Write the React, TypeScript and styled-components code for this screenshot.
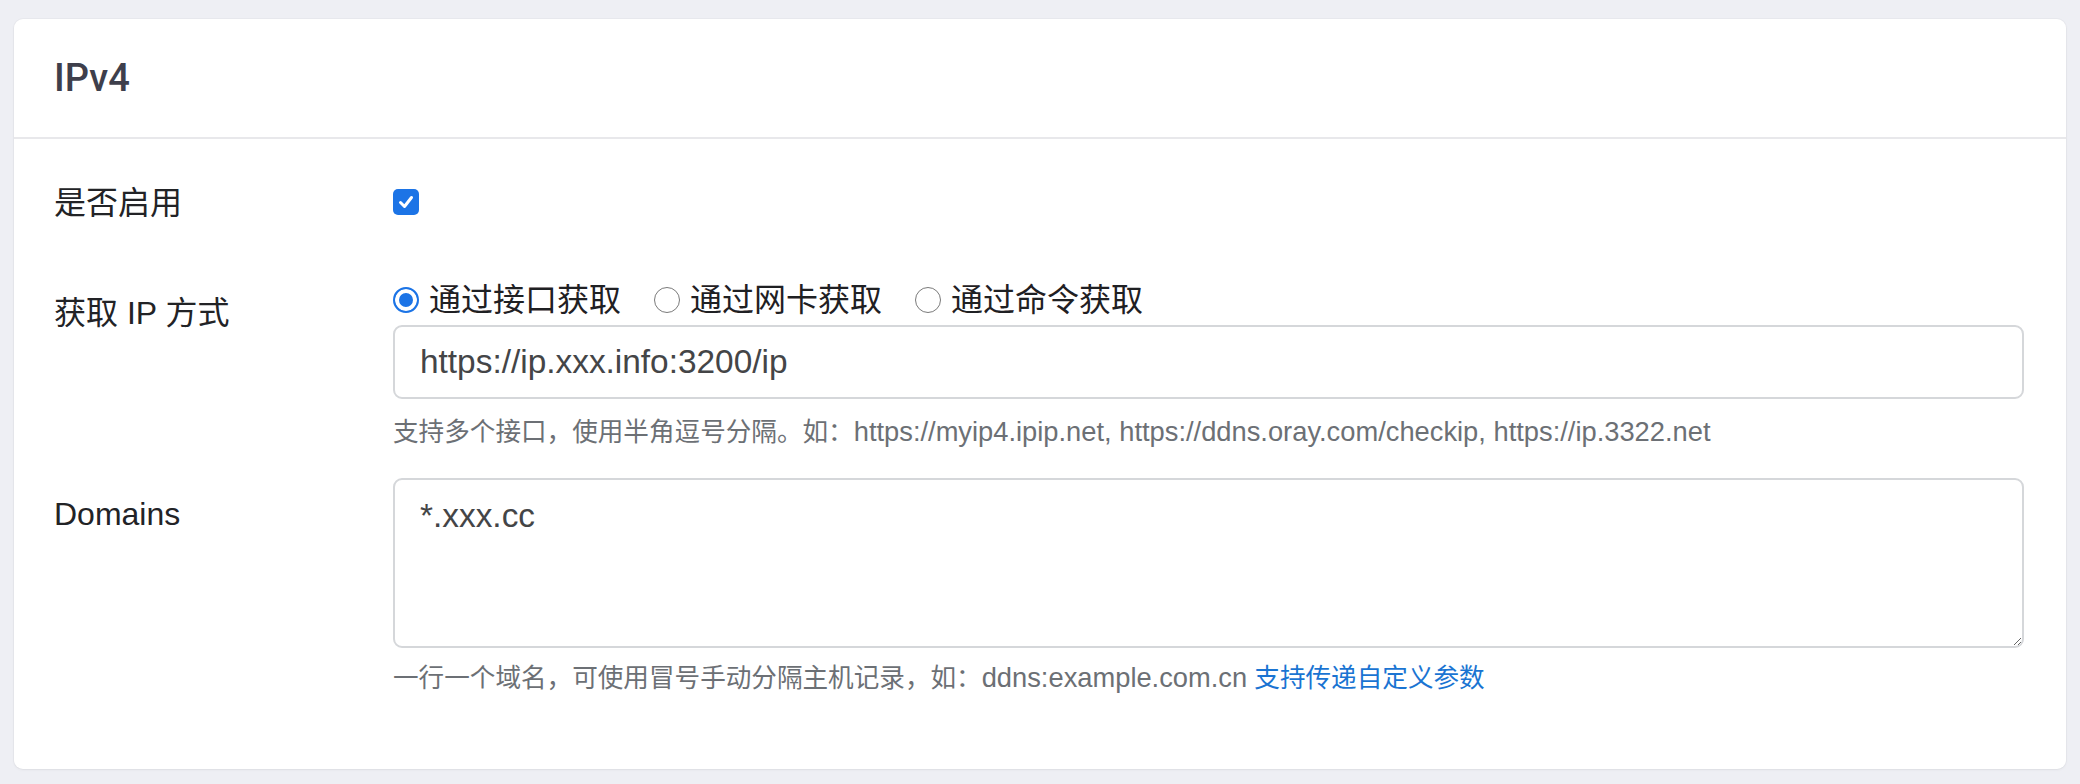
import React from "react";
import styled, { createGlobalStyle } from "styled-components";

const GlobalStyle = createGlobalStyle`
  html, body {
    margin: 0;
    padding: 0;
    background: #eeeff4;
  }
  body {
    font-family: "Liberation Sans", "Noto Sans CJK SC", sans-serif;
    -webkit-font-smoothing: antialiased;
  }
  * { box-sizing: border-box; }
`;

const Page = styled.div`
  padding: 19px 14px 16px;
`;

const Card = styled.section`
  background: #ffffff;
  border-radius: 9px;
  box-shadow: 0 0 0 1px rgba(0, 0, 0, 0.025), 0 1px 3px rgba(0, 0, 0, 0.05);
`;

const CardHeader = styled.header`
  height: 120px;
  padding: 0 40px;
  display: flex;
  align-items: center;
  border-bottom: 2px solid #e8e8eb;
  font-family: Roboto, "Liberation Sans", sans-serif;
  font-size: 38px;
  font-weight: 500;
  color: #3e3f4c;
`;

const CardBody = styled.div`
  padding: 41px 42px 72px 40px;
`;

const Row = styled.div<{ $top: number }>`
  display: grid;
  grid-template-columns: 339px 1fr;
  margin-top: ${(p) => p.$top}px;
`;

const Label = styled.div<{ $pad: number }>`
  font-size: 32px;
  line-height: 46px;
  color: #222326;
  padding-top: ${(p) => p.$pad}px;
`;

const Control = styled.div`
  display: flex;
  flex-direction: column;
  min-width: 0;
`;

const CheckLine = styled.div`
  height: 46px;
  display: flex;
  align-items: center;
`;

const CheckBox = styled.span`
  width: 26px;
  height: 26px;
  border-radius: 5px;
  background: #1c74e6;
  display: inline-flex;
  align-items: center;
  justify-content: center;
  margin-top: -2px;
`;

const RadioGroup = styled.div`
  display: flex;
  align-items: center;
  height: 46px;
  gap: 33px;
`;

const RadioItem = styled.label`
  display: inline-flex;
  align-items: center;
  gap: 10px;
  font-size: 32px;
  line-height: 46px;
  color: #1f2023;
`;

const RadioDot = styled.input`
  appearance: none;
  -webkit-appearance: none;
  margin: 0;
  width: 26px;
  height: 26px;
  border-radius: 50%;
  border: 1.5px solid #7a7a7a;
  background: #ffffff;
  margin-top: -1px;
  &:checked {
    border: 2px solid #1c74e6;
    background: #1c74e6;
    box-shadow: inset 0 0 0 4px #ffffff;
  }
`;

const TextInput = styled.input`
  display: block;
  width: 100%;
  height: 74px;
  margin: 2px 0 0;
  padding: 0 25px;
  border: 2px solid #d5d7da;
  border-radius: 9px;
  font-family: "Liberation Sans", "Noto Sans CJK SC", sans-serif;
  font-size: 33.4px;
  color: #444547;
  background: #fff;
  outline: none;
`;

const TextArea = styled.textarea`
  display: block;
  width: 100%;
  height: 170px;
  margin: 0;
  padding: 11px 25px;
  border: 2px solid #d5d7da;
  border-radius: 9px;
  font-family: "Liberation Sans", "Noto Sans CJK SC", sans-serif;
  font-size: 33.4px;
  line-height: 1.5;
  color: #444547;
  background: #fff;
  outline: none;
  resize: vertical;
`;

const Help = styled.div<{ $top: number }>`
  margin-top: ${(p) => p.$top}px;
  font-size: 25.6px;
  line-height: 38px;
  color: #6c7075;
  white-space: nowrap;
`;

const HelpLatin = styled.span`
  font-size: 27.3px;
`;

const HelpLink = styled.a`
  color: #1a74d2;
  text-decoration: none;
`;

export default function App() {
  return (
    <>
      <GlobalStyle />
      <Page>
        <Card>
          <CardHeader>IPv4</CardHeader>
          <CardBody>
            <Row $top={0}>
              <Label $pad={0}>是否启用</Label>
              <Control>
                <CheckLine>
                  <CheckBox role="checkbox" aria-checked="true">
                    <svg width="18" height="18" viewBox="0 0 18 18">
                      <polyline
                        points="3.5,9.5 7.5,13.5 14.5,4.5"
                        fill="none"
                        stroke="#ffffff"
                        strokeWidth="3"
                        strokeLinecap="round"
                        strokeLinejoin="round"
                      />
                    </svg>
                  </CheckBox>
                </CheckLine>
              </Control>
            </Row>

            <Row $top={51}>
              <Label $pad={13}>获取 IP 方式</Label>
              <Control>
                <RadioGroup>
                  <RadioItem>
                    <RadioDot type="radio" name="ipv4-mode" defaultChecked />
                    通过接口获取
                  </RadioItem>
                  <RadioItem>
                    <RadioDot type="radio" name="ipv4-mode" />
                    通过网卡获取
                  </RadioItem>
                  <RadioItem>
                    <RadioDot type="radio" name="ipv4-mode" />
                    通过命令获取
                  </RadioItem>
                </RadioGroup>
                <TextInput defaultValue="https://ip.xxx.info:3200/ip" />
                <Help $top={14}>
                  支持多个接口，使用半角逗号分隔。如：
                  <HelpLatin>https://myip4.ipip.net, https://ddns.oray.com/checkip, https://ip.3322.net</HelpLatin>
                </Help>
              </Control>
            </Row>

            <Row $top={27}>
              <Label $pad={13}>Domains</Label>
              <Control>
                <TextArea defaultValue="*.xxx.cc" />
                <Help $top={11}>
                  一行一个域名，可使用冒号手动分隔主机记录，如：
                  <HelpLatin>ddns:example.com.cn</HelpLatin>{" "}
                  <HelpLink href="#">支持传递自定义参数</HelpLink>
                </Help>
              </Control>
            </Row>
          </CardBody>
        </Card>
      </Page>
    </>
  );
}
